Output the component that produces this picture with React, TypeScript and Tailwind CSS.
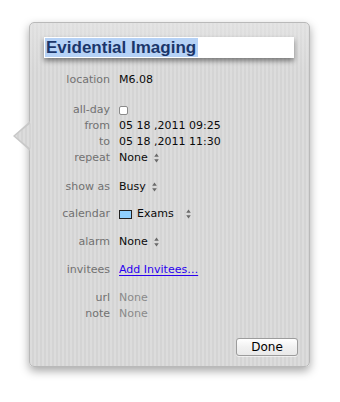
import type { ReactNode } from 'react';

const Stepper = () => (
  <svg width="5" height="10" viewBox="0 0 5 10" className="inline-block">
    <path d="M2.5 0.5 L4.8 3.8 L0.2 3.8 Z" fill="#6a6a6a" />
    <path d="M2.5 9.5 L4.8 6.2 L0.2 6.2 Z" fill="#6a6a6a" />
  </svg>
);

type RowProps = {
  label: string;
  children?: ReactNode;
  className?: string;
};

function Row({ label, children, className = '' }: RowProps) {
  return (
    <div className={`flex items-center leading-[16px] h-[16px] ${className}`}>
      <span className="w-[80px] shrink-0 text-right text-[#717171]">{label}</span>
      <div className="ml-[9px] flex items-center text-[#0a0a0a]">{children}</div>
    </div>
  );
}

export default function App() {
  return (
    <div
      className="w-[340px] h-[402px] bg-white pt-[22px] pl-[29px] text-[11px]"
      style={{ fontFamily: '"DejaVu Sans", "Liberation Sans", sans-serif' }}
    >
      <div className="relative w-[281px] h-[345px] rounded-[5px] border border-[#b9b9b9] shadow-[0_4px_10px_rgba(0,0,0,0.35)] bg-[linear-gradient(180deg,rgba(236,236,236,0.5)_0px,rgba(236,236,236,0)_50px),repeating-linear-gradient(90deg,#dcdcdc_0px,#dcdcdc_2px,#d4d4d4_2px,#d4d4d4_4px)]">
        {/* popover arrow */}
        <div className="absolute left-[-17px] top-[98px] w-[17px] h-[30px] bg-[#c8c8c8] [clip-path:polygon(0_50%,100%_0,100%_100%)]" />
        <div className="absolute left-[-15px] top-[100px] w-[16px] h-[26px] bg-[repeating-linear-gradient(90deg,#dcdcdc_0px,#dcdcdc_2px,#d4d4d4_2px,#d4d4d4_4px)] [clip-path:polygon(0_50%,100%_0,100%_100%)]" />

        <div className="flex flex-col">
          <div className="mt-[14px] ml-[14px] w-[250px] h-[21px] bg-white shadow-[0_3px_5px_rgba(0,0,0,0.45)] flex items-center pl-[1px]">
            <span
              className="bg-[#b6d2f6] text-[#1b366a] font-bold text-[17px] leading-[19px] pl-[1px] pr-[2px]"
              style={{ fontFamily: '"Liberation Sans", Arial, sans-serif' }}
            >
              Evidential Imaging
            </span>
          </div>

          <Row label="location" className="mt-[14px]">M6.08</Row>

          <Row label="all-day" className="mt-[14px] h-[15px]">
            <span className="block w-[9px] h-[9px] rounded-[2px] border border-[#8a8a8a] bg-white" />
          </Row>
          <Row label="from">05 18 ,2011 09:25</Row>
          <Row label="to">05 18 ,2011 11:30</Row>
          <Row label="repeat">
            <span>None</span>
            <span className="ml-[6px] flex"><Stepper /></span>
          </Row>

          <Row label="show as" className="mt-[13px]">
            <span>Busy</span>
            <span className="ml-[6px] flex"><Stepper /></span>
          </Row>

          <Row label="calendar" className="mt-[11px]">
            <span className="block w-[13px] h-[9px] border border-[#222] bg-[#8fd0ff]" />
            <span className="ml-[5px]">Exams</span>
            <span className="ml-[12px] flex"><Stepper /></span>
          </Row>

          <Row label="alarm" className="mt-[12px]">
            <span>None</span>
            <span className="ml-[6px] flex"><Stepper /></span>
          </Row>

          <Row label="invitees" className="mt-[12px]">
            <span className="text-[#2a00f0] underline underline-offset-2">Add Invitees…</span>
          </Row>

          <Row label="url" className="mt-[12px]">
            <span className="text-[#8a8a8a]">None</span>
          </Row>
          <Row label="note">
            <span className="text-[#8a8a8a]">None</span>
          </Row>

          <div className="mt-[16px] flex justify-end pr-[11px]">
            <button className="w-[62px] h-[18px] rounded-[3px] border border-[#9c9c9c] bg-[linear-gradient(180deg,#ffffff,#f1f1f1_50%,#e9e9e9)] text-[12px] leading-[16px] text-black shadow-[0_1px_0_rgba(255,255,255,0.6)]">
              Done
            </button>
          </div>
        </div>
      </div>
    </div>
  );
}
